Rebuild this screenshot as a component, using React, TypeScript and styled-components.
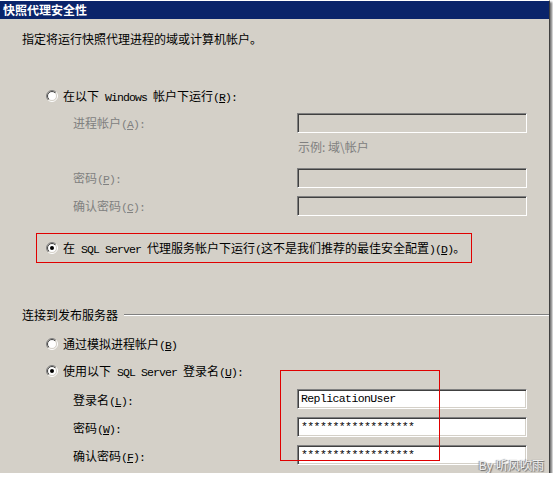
import React, { useId } from 'react';
import styled, { createGlobalStyle } from 'styled-components';

const GlobalStyle = createGlobalStyle`
  html, body {
    margin: 0;
    padding: 0;
    background: #ffffff;
  }
  body {
    font-family: "Noto Sans CJK SC", "Liberation Sans", sans-serif;
    font-size: 12px;
    color: #000000;
  }
`;

const Window = styled.div`
  position: relative;
  box-sizing: border-box;
  width: 550px;
  height: 473px;
  background: #d4d0c8;
  border-top: 1px solid #ffffff;
  border-right: 1px solid #404040;
  box-shadow: 2px 2px 2px rgba(0, 0, 0, 0.55);
  display: flex;
  flex-direction: column;
`;

const TitleBar = styled.div`
  height: 18px;
  line-height: 18px;
  background: #0a246a;
  color: #ffffff;
  font-weight: bold;
  font-size: 12px;
  padding-left: 3px;
`;

const Body = styled.div`
  display: flex;
  flex-direction: column;
  align-items: flex-start;
`;

const Intro = styled.div`
  margin: 12px 0 0 22px;
  height: 16px;
  line-height: 16px;
`;

// SimSun-style half-width latin: 6px advance per character
const Mono = styled.span`
  font-family: "Liberation Mono", monospace;
  font-size: 11.5px;
  letter-spacing: -0.9px;
  line-height: 10px;
  white-space: pre;
`;

const RadioRow = styled.div<{ $mt: number }>`
  display: flex;
  align-items: center;
  gap: 5px;
  height: 20px;
  margin: ${({ $mt }) => $mt}px 0 0 46px;
  line-height: 16px;
`;

const NoteBox = styled.div`
  box-sizing: border-box;
  display: flex;
  align-items: center;
  gap: 5px;
  width: 436px;
  height: 30px;
  margin: 17px 0 0 36px;
  padding-left: 9px;
  border: 1px solid #e00000;
  line-height: 16px;
`;

const Fields = styled.div`
  position: relative;
  display: flex;
  flex-direction: column;
  padding-left: 73px;
`;

const FieldRow = styled.div<{ $mt: number }>`
  display: grid;
  grid-template-columns: 224px 230px;
  grid-template-rows: 20px;
  align-items: center;
  height: 20px;
  margin-top: ${({ $mt }) => $mt}px;
  line-height: 16px;
`;

const Label = styled.span<{ $disabled?: boolean }>`
  height: 16px;
  color: ${({ $disabled }) => ($disabled ? '#808080' : '#000000')};
  margin-top: ${({ $disabled }) => ($disabled ? '0' : '2px')};
`;

const TextBox = styled.div<{ $disabled?: boolean }>`
  box-sizing: border-box;
  height: 20px;
  display: flex;
  align-items: center;
  padding-left: 3px;
  background: ${({ $disabled }) => ($disabled ? '#d4d0c8' : '#ffffff')};
  border-top: 1px solid #808080;
  border-left: 1px solid #808080;
  border-bottom: 1px solid #ffffff;
  border-right: 1px solid #ffffff;
  box-shadow: inset 1px 1px 0 #404040, inset -1px -1px 0 #d4d0c8;
  font-family: "Liberation Mono", monospace;
  font-size: 11.5px;
  letter-spacing: -0.6px;
  color: #000000;
  white-space: pre;
`;

const Hint = styled.div`
  height: 16px;
  line-height: 16px;
  margin: 6px 0 0 225px;
  color: #808080;
`;

const GroupHeader = styled.div`
  display: flex;
  align-items: center;
  align-self: stretch;
  height: 16px;
  margin: 44px 0 0 22px;
  line-height: 16px;

  &::after {
    content: '';
    flex: 1;
    margin-left: 6px;
    border-top: 1px solid #808080;
    border-bottom: 1px solid #ffffff;
  }
`;

const Highlight = styled.div`
  position: absolute;
  left: 280px;
  top: -11px;
  width: 160px;
  height: 91px;
  box-sizing: border-box;
  border: 1px solid #e00000;
  pointer-events: none;
`;

const Watermark = styled.div`
  position: absolute;
  right: 5px;
  bottom: 0;
  line-height: 14px;
  font-family: "Liberation Sans", "Noto Sans CJK SC", sans-serif;
  font-size: 12px;
  color: #eeeeee;
  text-shadow: 1px 1px 1px #6a6a6a, -1px 0 1px #8a8a8a;
`;

const Radio: React.FC<{ checked?: boolean }> = ({ checked }) => {
  const id = useId().replace(/:/g, '');
  return (
    <svg width="12" height="12" viewBox="0 0 12 12" style={{ flexShrink: 0 }}>
      <defs>
        <linearGradient id={`o${id}`} x1="0" y1="0" x2="1" y2="1">
          <stop offset="0.5" stopColor="#808080" />
          <stop offset="0.5" stopColor="#ffffff" />
        </linearGradient>
        <linearGradient id={`i${id}`} x1="0" y1="0" x2="1" y2="1">
          <stop offset="0.5" stopColor="#404040" />
          <stop offset="0.5" stopColor="#d4d0c8" />
        </linearGradient>
      </defs>
      <circle cx="6" cy="6" r="5.5" fill="none" stroke={`url(#o${id})`} />
      <circle cx="6" cy="6" r="4.5" fill="#ffffff" stroke={`url(#i${id})`} />
      {checked && <circle cx="6" cy="6" r="2" fill="#000000" />}
    </svg>
  );
};

const Key: React.FC<{ k: string; colon?: boolean }> = ({ k, colon }) => (
  <Mono>
    (<u>{k}</u>){colon ? ':' : ''}
  </Mono>
);

const App: React.FC = () => {
  return (
    <>
      <GlobalStyle />
      <Window>
        <TitleBar>快照代理安全性</TitleBar>
        <Body>
          <Intro>指定将运行快照代理进程的域或计算机帐户。</Intro>

          <RadioRow $mt={39}>
            <Radio />
            <span>
              在以下<Mono> Windows </Mono>帐户下运行<Key k="R" colon />
            </span>
          </RadioRow>

          <Fields>
            <FieldRow $mt={7}>
              <Label $disabled>
                进程帐户<Key k="A" colon />
              </Label>
              <TextBox $disabled />
            </FieldRow>
            <Hint>示例: 域\帐户</Hint>
            <FieldRow $mt={13}>
              <Label $disabled>
                密码<Key k="P" colon />
              </Label>
              <TextBox $disabled />
            </FieldRow>
            <FieldRow $mt={8}>
              <Label $disabled>
                确认密码<Key k="C" colon />
              </Label>
              <TextBox $disabled />
            </FieldRow>
          </Fields>

          <NoteBox>
            <Radio checked />
            <span>
              在<Mono> SQL Server </Mono>代理服务帐户下运行<Mono>(</Mono>这不是我们推荐的最佳安全配置
              <Mono>)</Mono>
              <Key k="D" />。
            </span>
          </NoteBox>

          <GroupHeader>连接到发布服务器</GroupHeader>

          <RadioRow $mt={11}>
            <Radio />
            <span>
              通过模拟进程帐户<Key k="B" />
            </span>
          </RadioRow>
          <RadioRow $mt={7}>
            <Radio checked />
            <span>
              使用以下<Mono> SQL Server </Mono>登录名<Key k="U" colon />
            </span>
          </RadioRow>

          <Fields>
            <FieldRow $mt={8}>
              <Label>
                登录名<Key k="L" colon />
              </Label>
              <TextBox>ReplicationUser</TextBox>
            </FieldRow>
            <FieldRow $mt={8}>
              <Label>
                密码<Key k="W" colon />
              </Label>
              <TextBox>******************</TextBox>
            </FieldRow>
            <FieldRow $mt={8}>
              <Label>
                确认密码<Key k="F" colon />
              </Label>
              <TextBox>******************</TextBox>
            </FieldRow>
            <Highlight />
          </Fields>
        </Body>
        <Watermark>By 听风吹雨</Watermark>
      </Window>
    </>
  );
};

export default App;
